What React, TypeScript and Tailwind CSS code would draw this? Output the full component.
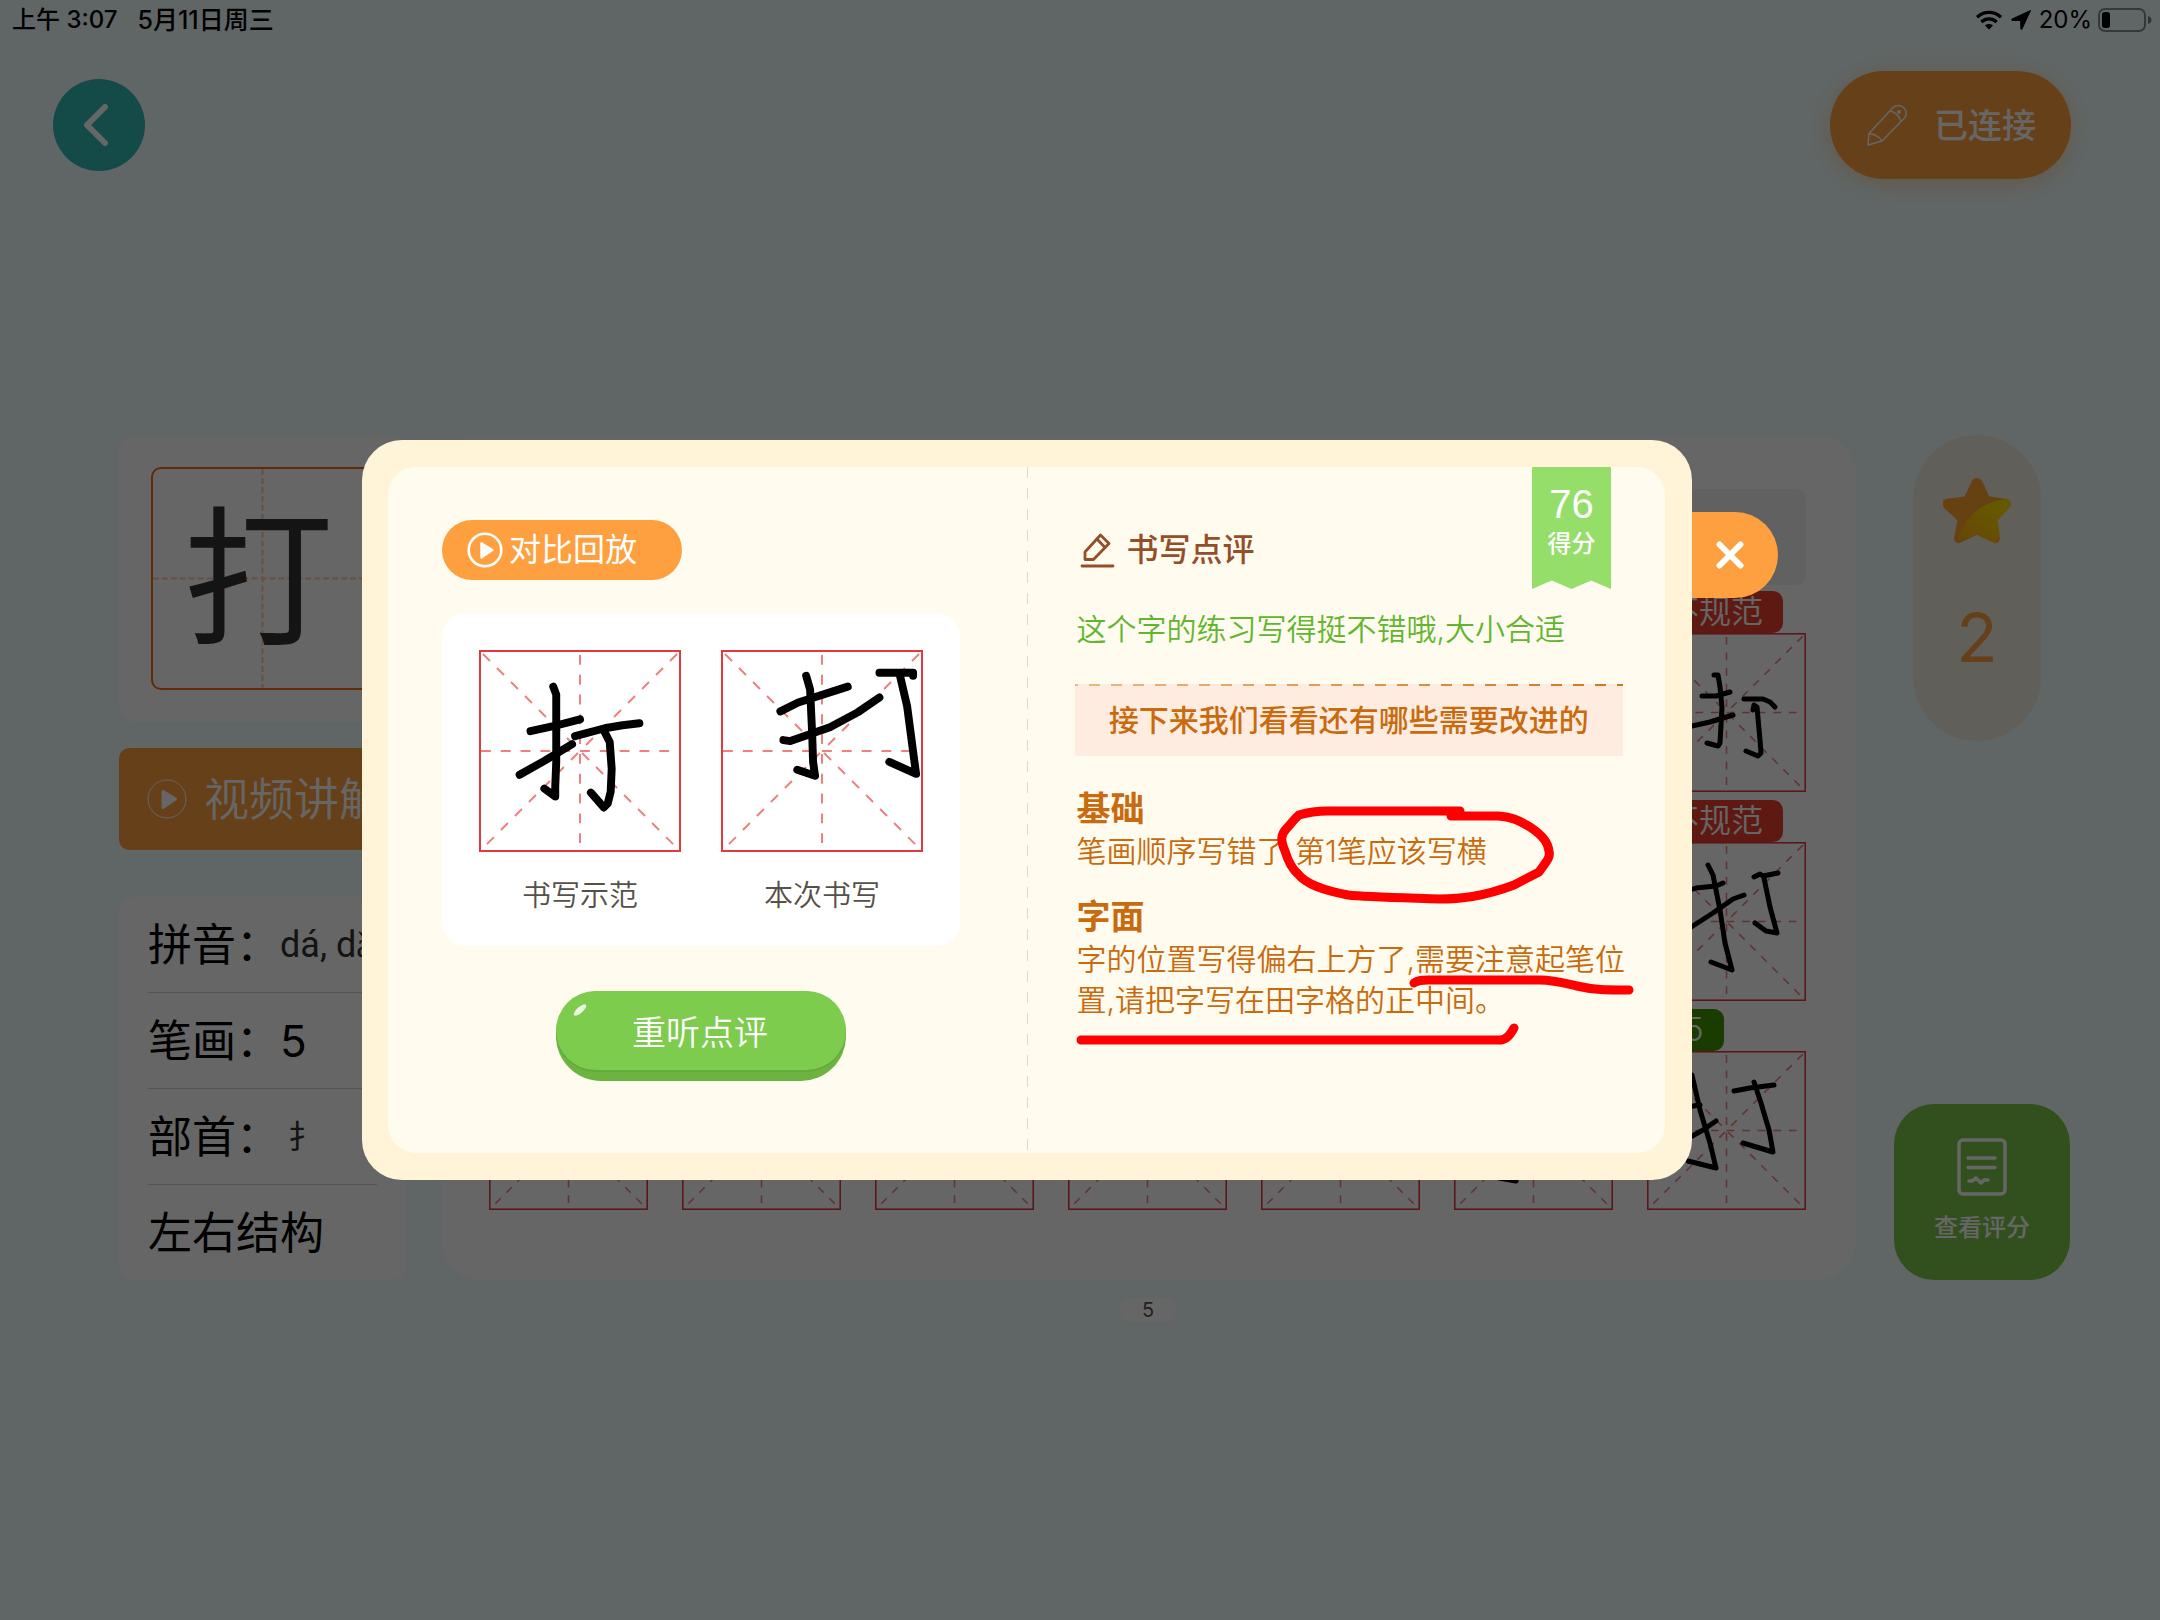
import type { ReactNode } from "react";

type Point = [number, number];
type Stroke = Point[];

const MODEL: Stroke[] = [
  [[52, 82], [75, 77], [102, 70]],
  [[75, 37], [78, 45], [78, 83], [78, 113], [77, 138], [77, 148], [66, 140]],
  [[41, 126], [66, 112], [94, 95]],
  [[97, 87], [127, 79], [145, 76], [162, 74]],
  [[127, 83], [132, 93], [134, 120], [133, 143], [130, 155], [126, 159], [113, 144]],
];

const ATTEMPT: Stroke[] = [
  [[60, 62], [78, 53], [128, 37]],
  [[86, 26], [90, 40], [92, 83], [93, 113], [95, 127], [77, 121]],
  [[63, 91], [70, 92], [110, 78], [138, 63], [160, 48]],
  [[160, 23], [194, 23], [194, 26]],
  [[181, 27], [188, 57], [195, 110], [197, 125], [170, 113]],
];

const ROW_ONE: Stroke[] = [
  [[55, 63], [69, 63], [83, 59]],
  [[67, 42], [71, 42], [73, 54], [75, 74], [73, 110], [71, 113], [60, 110]],
  [[30, 96], [45, 93], [63, 89], [86, 82]],
  [[97, 66], [116, 66], [123, 69], [128, 74]],
  [[106, 77], [107, 72], [110, 74], [113, 107], [114, 120], [111, 123], [99, 118]],
];

const ROW_TWO: Stroke[] = [
  [[61, 23], [66, 33], [73, 68], [78, 101], [85, 128], [64, 120]],
  [[43, 48], [49, 46], [69, 44], [76, 41]],
  [[38, 89], [66, 71], [86, 57], [97, 53]],
  [[107, 35], [113, 32], [116, 34], [131, 31]],
  [[117, 36], [123, 65], [130, 91], [119, 89], [108, 81]],
];

const ROW_THREE: Stroke[] = [
  [[45, 24], [53, 59], [63, 92], [69, 117], [41, 110]],
  [[40, 56], [53, 54]],
  [[38, 89], [56, 79], [69, 70]],
  [[87, 40], [103, 37], [127, 34]],
  [[107, 31], [114, 52], [122, 79], [126, 101], [96, 92]],
];

const ROW_THREE_LEFT: Stroke[] = [[[62, 30], [62, 130], [45, 127]]];

function toPath(points: Stroke): string {
  return points.map(([x, y], i) => `${i === 0 ? "M" : "L"}${x} ${y}`).join(" ");
}

function PracticeCell({
  strokes = [],
  inkBox = 204,
  inkWidth = 8,
  label,
}: {
  strokes?: Stroke[];
  inkBox?: number;
  inkWidth?: number;
  label: string;
}) {
  return (
    <svg viewBox="0 0 204 204" className="block w-full" role="img" aria-label={label}>
      <g stroke="#f08080" strokeWidth="2" strokeDasharray="10 10" fill="none">
        <path d="M4 4 102 102M200 4 102 102M8 196 102 102M196 196 102 102" />
        <path d="M2 102H202M102 5V202" />
      </g>
      <rect x="1" y="1" width="202" height="202" fill="none" stroke="#e2383c" strokeWidth="2" />
      <svg viewBox={`0 0 ${inkBox} ${inkBox}`} width="204" height="204">
        <g fill="none" stroke="#000" strokeWidth={inkWidth} strokeLinecap="round" strokeLinejoin="round">
          {strokes.map((s, i) => (
            <path key={i} d={toPath(s)} />
          ))}
        </g>
      </svg>
    </svg>
  );
}

function PlayIcon({ className, ring }: { className: string; ring: number }) {
  return (
    <svg viewBox="0 0 42 42" className={className} fill="none" aria-hidden="true">
      <circle cx="21" cy="21" r="19" stroke="currentColor" strokeWidth={ring} />
      <path d="M17 13.500 29.500 21 17 29.500Z" fill="currentColor" stroke="currentColor" strokeWidth="3" strokeLinejoin="round" />
    </svg>
  );
}

function StatusBar() {
  return (
    <div className="flex h-10 items-center justify-between pr-2 pl-3 text-2xl leading-10 font-medium text-black">
      <div className="flex gap-5">
        <span>上午 3:07</span>
        <span className="text-[25px]">5月11日周三</span>
      </div>
      <div className="flex items-center gap-[6px]">
        <svg viewBox="0 0 28 21" className="h-5 w-7" fill="none" stroke="#000" strokeWidth="3.600" aria-hidden="true">
          <path d="M1.500 7.500C8.500 .800 19.500 .800 26.500 7.500" />
          <path d="M6 12.500C10.500 8.300 17.500 8.300 22 12.500" />
          <path d="M14 20.500 9.800 16.300C12 14.200 16 14.200 18.200 16.300Z" fill="#000" stroke="none" />
        </svg>
        <svg viewBox="0 0 19 19" className="mx-[2px] size-5" aria-hidden="true">
          <path d="M18.300 .700 10.600 17.600C10.200 18.500 9.300 18.300 9.300 17.400V9.900H1.600C.700 9.900 .500 9 1.300 8.600Z" fill="#000" stroke="#000" strokeWidth="1" />
        </svg>
        <span className="font-normal">20%</span>
        <svg viewBox="0 0 54 24" className="h-6 w-[54px]" aria-hidden="true">
          <rect x="1" y="1" width="46" height="22" rx="6" fill="none" stroke="#000" strokeOpacity=".45" strokeWidth="2" />
          <rect x="4" y="4" width="8" height="16" rx="3" fill="#000" />
          <path d="M50 8C52.500 8.800 53.500 10 53.500 12S52.500 15.200 50 16Z" fill="#000" fillOpacity=".5" />
        </svg>
      </div>
    </div>
  );
}

function Header() {
  return (
    <header className="flex items-center justify-between pt-[31px] pr-[89px] pl-[53px]">
      <button type="button" aria-label="返回" className="flex size-[92px] items-center justify-center rounded-full bg-[#32bab5] text-white">
        <svg viewBox="0 0 42 42" className="mr-[6px] size-[42px]" fill="none" stroke="currentColor" strokeWidth="6" strokeLinecap="round" strokeLinejoin="round" aria-hidden="true">
          <path d="M30 3 12 21 30 39" />
        </svg>
      </button>
      <button type="button" className="flex h-[108px] w-[241px] items-center gap-[26px] rounded-full bg-[#ffa040] pl-9 text-[34px] font-medium text-white shadow-[0_4px_24px_#ffa04066]">
        <svg viewBox="0 0 42 42" className="size-[42px]" fill="none" stroke="currentColor" strokeWidth="1.500" strokeLinejoin="round" aria-hidden="true">
          <path d="M2 41 3 29.500 26.500 4C29 1 34 .500 37.500 3.500C41 7 41 11 38.500 14L16 37Z" />
          <path d="M24 7C29 8 33 11.500 35 17.500M3 29.500C8 30 13 32.500 16 37" />
          <circle cx="33" cy="8" r="1.200" fill="currentColor" />
        </svg>
        已连接
      </button>
    </header>
  );
}

function InfoRow({ term, children }: { term: string; children?: ReactNode }) {
  return (
    <div className="flex h-24 items-center border-b border-[#d4d4d4] last:h-[95px] last:border-b-0">
      <dt className="text-[44px] whitespace-nowrap">{term}</dt>
      {children && <dd className="whitespace-nowrap">{children}</dd>}
    </div>
  );
}

function CharacterColumn() {
  return (
    <aside className="flex w-[287px] flex-none flex-col">
      <div className="rounded-2xl bg-white p-8">
        <div className="relative flex h-[223px] items-center justify-center rounded-[10px] border-2 border-[#f56a10] text-[150px] leading-none text-[#333]">
          <svg className="absolute inset-0 size-full" viewBox="0 0 220 220" fill="none" stroke="#ffc9a5" strokeWidth="2" strokeDasharray="6 3" aria-hidden="true">
            <path d="M110 0V220M0 110H220" />
          </svg>
          <span className="relative pr-2">打</span>
        </div>
      </div>
      <button type="button" className="mt-[26px] flex h-[102px] items-center gap-4 overflow-hidden rounded-[10px] bg-[#ffa040] pl-[27px] text-[45px] leading-none font-[350] whitespace-nowrap text-white">
        <PlayIcon className="size-[42px] flex-none" ring={1} />
        视频讲解
      </button>
      <dl className="mt-[47px] rounded-2xl bg-white px-[29px]">
        <InfoRow term="拼音：">
          <span className="font-[Roboto] text-4xl text-[#333]">dá, dǎ</span>
        </InfoRow>
        <InfoRow term="笔画：">
          <span className="text-[44px]">5</span>
        </InfoRow>
        <InfoRow term="部首：">
          <span className="pl-2 text-[32px] text-[#333]">扌</span>
        </InfoRow>
        <InfoRow term="左右结构" />
      </dl>
    </aside>
  );
}

type Tag = { text: string; tone: "bad" | "good" };
type Cell = { strokes?: Stroke[]; tag?: Tag };

const EMPTY: Cell[] = Array.from({ length: 6 }, () => ({}));

const CELLS: Cell[] = [
  ...EMPTY,
  { strokes: ROW_ONE, tag: { text: "不规范", tone: "bad" } },
  ...EMPTY,
  { strokes: ROW_TWO, tag: { text: "不规范", tone: "bad" } },
  ...EMPTY.slice(1),
  { strokes: ROW_THREE_LEFT },
  { strokes: ROW_THREE, tag: { text: "75", tone: "good" } },
];

function PracticeSheet() {
  return (
    <section className="flex-1 rounded-[40px] bg-white pt-[54px] pr-[50px] pb-[70px] pl-12">
      <div className="h-24 rounded-[10px] bg-[#f3f3f3]" />
      <div className="mt-[6px] grid grid-cols-7 gap-x-[34px] gap-y-2">
        {CELLS.map((cell, i) => (
          <div key={i} className="flex flex-col items-start">
            <div className="flex h-[42px]">
              {cell.tag && (
                <span
                  className={
                    cell.tag.tone === "bad"
                      ? "rounded-[10px] bg-[#eb422d] px-5 text-[32px] leading-[42px] font-[350] text-white"
                      : "rounded-[10px] bg-[#419600] px-5 text-[32px] leading-[42px] font-[350] text-white"
                  }
                >
                  {cell.tag.text}
                </span>
              )}
            </div>
            <PracticeCell strokes={cell.strokes} inkBox={159} inkWidth={5} label="练习格" />
          </div>
        ))}
      </div>
    </section>
  );
}

function ScoreColumn() {
  return (
    <aside className="flex w-[176px] flex-none flex-col items-center justify-between">
      <div className="mr-[10px] flex h-[306px] w-32 flex-col items-center rounded-full bg-[#f3eee0] pt-[42px] text-[#ffa040]">
        <svg viewBox="0 0 66 66" className="size-[68px]" aria-hidden="true">
          <defs>
            <clipPath id="star-shape">
              <path d="M28 4C30 0 36 0 38 4L45 19 61 21C66 22 67 27 64 30L53 42 55 58C56 63 52 66 48 63L33 56 18 63C14 66 10 63 11 58L14 42 1 30C-2 26 -1 22 4 21L21 19Z" />
            </clipPath>
            <linearGradient id="star-shine" x1="1" y1="0" x2="0.300" y2="1">
              <stop offset="0.300" stopColor="#ffdc00" />
              <stop offset="1" stopColor="#ffb414" />
            </linearGradient>
          </defs>
          <g clipPath="url(#star-shape)">
            <rect width="66" height="66" fill="#ffa22f" />
            <path d="M66 21C42 21 20 38 14 62L33 56 50 66 66 40Z" fill="url(#star-shine)" />
          </g>
        </svg>
        <span className="mt-[46px] text-[68px] leading-[92px]">2</span>
      </div>
      <button type="button" className="flex size-[176px] flex-col items-center gap-4 rounded-[40px] bg-[#7dc84b] pt-[34px] text-2xl font-medium text-white">
        <svg viewBox="0 0 50 58" className="h-[58px] w-[50px]" fill="none" stroke="currentColor" strokeWidth="3.500" strokeLinecap="round" strokeLinejoin="round" aria-hidden="true">
          <rect x="2" y="2" width="46" height="54" rx="4" />
          <path d="M11 20H38M11 29.500H38" />
          <path d="M12 43H15L19 40 24 45 27 42H31" />
        </svg>
        查看评分
      </button>
    </aside>
  );
}

function Ribbon() {
  return (
    <div className="absolute top-0 right-[54px] flex h-[122px] w-[79px] flex-col items-center bg-[#95de69] pt-[13px] font-medium text-white [clip-path:polygon(0_0,100%_0,100%_100%,75%_93%,50%_100%,25%_93%,0_100%)]">
      <span className="font-['Liberation_Sans'] text-[40px] leading-[48px] font-normal">76</span>
      <span className="text-2xl leading-8">得分</span>
    </div>
  );
}

function ComparePane() {
  return (
    <section className="flex w-1/2 flex-col items-start pt-[53px] pl-[54px]">
      <button type="button" className="flex h-[60px] w-60 items-center gap-[6px] rounded-full bg-[#ffa040] pl-[25px] text-[32px] leading-none text-white">
        <PlayIcon className="size-9" ring={3} />
        对比回放
      </button>
      <div className="mt-[33px] flex h-[333px] w-[518px] justify-center gap-10 rounded-3xl bg-white pt-[37px]">
        <figure className="w-[202px]">
          <PracticeCell strokes={MODEL} label="书写示范" />
          <figcaption className="mt-6 text-center text-[29px] leading-10 font-[350] text-[#555048]">书写示范</figcaption>
        </figure>
        <figure className="w-[202px]">
          <PracticeCell strokes={ATTEMPT} label="本次书写" />
          <figcaption className="mt-6 text-center text-[29px] leading-10 font-[350] text-[#555048]">本次书写</figcaption>
        </figure>
      </div>
      <div className="flex w-[518px] justify-center pt-[45px]">
        <button type="button" className="relative h-[90px] w-[290px] rounded-full bg-[#6db342] pb-[11px] text-[34px] font-[350] text-white">
          <span className="flex h-[79px] items-center justify-center rounded-full bg-[#7dcc4d] pt-1 pr-[2px] shadow-[0_2px_0_#65aa3c]">重听点评</span>
          <span className="absolute top-4 left-4 h-[6px] w-4 -rotate-[42deg] rounded-[50%] bg-white/85" />
        </button>
      </div>
    </section>
  );
}

function ReviewPane() {
  return (
    <section className="w-1/2 pt-[61px] pl-[50px]">
      <h2 className="flex items-center gap-3 pl-[2px] text-[32px] leading-[44px] font-medium text-[#954f28]">
        <svg viewBox="0 0 36 36" className="size-9" fill="none" stroke="currentColor" strokeWidth="2.800" strokeLinecap="round" strokeLinejoin="round" aria-hidden="true">
          <path d="M6 20 21.500 3 30 11.500 14.500 27.500H6Z" />
          <path d="M18 7 26 15.500" />
          <path d="M3 34H34" />
        </svg>
        书写点评
      </h2>
      <p className="mt-9 text-[30px] leading-[42px] font-[350] whitespace-nowrap text-[#62b62f]">这个字的练习写得挺不错哦,大小合适</p>
      <div className="relative mt-[34px] mr-[42px] -ml-[2px] bg-[#ffece0]">
        <svg className="absolute top-0 left-0 h-[2px] w-full" aria-hidden="true">
          <defs>
            <linearGradient id="dash-fade" gradientUnits="userSpaceOnUse" x1="0" y1="0" x2="548" y2="0">
              <stop offset="0" stopColor="#ebb983" />
              <stop offset="1" stopColor="#cf771f" />
            </linearGradient>
          </defs>
          <line x1="0" y1="1" x2="100%" y2="1" stroke="url(#dash-fade)" strokeWidth="2" strokeDasharray="11 11" strokeDashoffset="8" />
        </svg>
        <p className="text-center text-[30px] leading-[72px] font-medium whitespace-nowrap text-[#c96a0f]">接下来我们看看还有哪些需要改进的</p>
      </div>
      <div className="pt-[31px] text-[30px] leading-[41px] font-[350] whitespace-nowrap text-[#c96a0f]">
        <h3 className="text-[34px] leading-[44px] font-bold">基础</h3>
        <p>笔画顺序写错了,第1笔应该写横</p>
        <h3 className="mt-[23px] text-[34px] leading-[44px] font-bold">字面</h3>
        <p>
          字的位置写得偏右上方了,需要注意起笔位
          <br />
          置,请把字写在田字格的正中间。
        </p>
      </div>
    </section>
  );
}

function MarkerStrokes() {
  return (
    <svg viewBox="0 0 1330 740" className="pointer-events-none absolute inset-0 size-full" fill="none" stroke="#fe0000" strokeWidth="9" strokeLinecap="round" strokeLinejoin="round" aria-hidden="true">
      <path d="M1098 371H966C953 371 947 372 937 375C931 380 929 384 925 388C919 394 918 400 923 411C926 421 929 428 936 434C944 444 960 450 986 455C1004 457 1050 458 1077 459C1098 459 1120 457 1152 445L1177 432C1183 423 1189 418 1187 411C1186 404 1183 397 1168 387C1156 380 1150 377 1136 376L1089 376" />
      <path d="M1052 543C1056 540 1060 540 1066 540H1178C1192 540 1202 543 1215 546C1232 550 1244 550 1267 550" />
      <path d="M719 600H1139C1145 599 1148 595 1152 588" />
    </svg>
  );
}

function ReviewDialog() {
  return (
    <div role="dialog" aria-modal="true" aria-label="书写点评" className="fixed inset-0 flex items-center justify-center bg-black/60 pr-5">
      <div className="relative h-[740px] w-[1330px] flex-none rounded-[40px] bg-[#fff4d8] py-[27px] pr-[27px] pl-[26px]">
        <div className="relative flex h-full rounded-[28px] bg-[#fffbee]">
          <ComparePane />
          <svg className="absolute top-0 left-1/2 h-full w-px" aria-hidden="true">
            <line x1="0" y1="0" x2="0" y2="100%" stroke="#dadad4" strokeWidth="2" strokeDasharray="11 10" />
          </svg>
          <ReviewPane />
          <Ribbon />
        </div>
        <MarkerStrokes />
      </div>
      <button type="button" aria-label="关闭" className="-mt-[510px] flex size-[86px] flex-none items-center justify-center rounded-r-full bg-[#ffa040] pr-[10px] text-white">
        <svg viewBox="0 0 28 28" className="size-7" stroke="currentColor" strokeWidth="6" strokeLinecap="round" aria-hidden="true">
          <path d="M3.500 3.500 24.500 24.500M24.500 3.500 3.500 24.500" />
        </svg>
      </button>
    </div>
  );
}

export default function App() {
  return (
    <div className="min-h-screen bg-[#f0ffff] font-[Inter,'Noto_Sans_CJK_SC',sans-serif] text-black">
      <StatusBar />
      <Header />
      <main className="mt-64 flex pr-[90px] pl-[119px]">
        <CharacterColumn />
        <div className="w-[35px] flex-none" />
        <PracticeSheet />
        <div className="w-[38px] flex-none" />
        <ScoreColumn />
      </main>
      <footer className="mt-[18px] flex justify-center pl-[136px]">
        <span className="w-14 rounded-full bg-white text-center text-xl leading-6 text-[#555]">5</span>
      </footer>
      <ReviewDialog />
    </div>
  );
}
